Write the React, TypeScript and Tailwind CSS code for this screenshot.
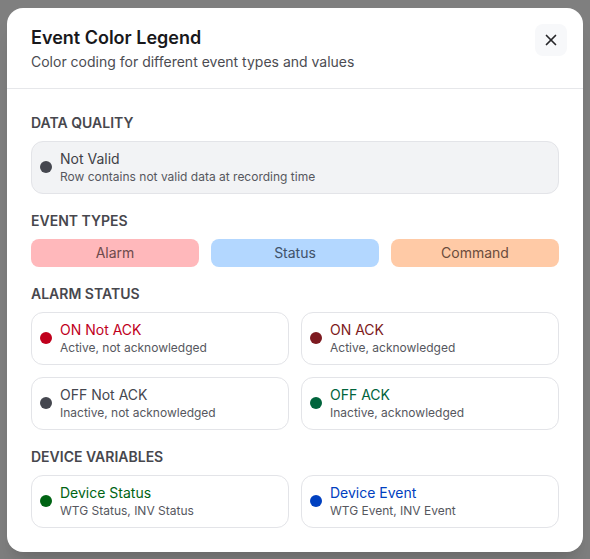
import { X } from "lucide-react";

type Item = {
  label: string;
  desc: string;
  dot: string;
  text: string;
};

const alarmItems: Item[] = [
  { label: "ON Not ACK", desc: "Active, not acknowledged", dot: "bg-[#c0001c]", text: "text-[#c0001c]" },
  { label: "ON ACK", desc: "Active, acknowledged", dot: "bg-[#7d1a20]", text: "text-[#7d1a20]" },
  { label: "OFF Not ACK", desc: "Inactive, not acknowledged", dot: "bg-[#45474f]", text: "text-[#45474f]" },
  { label: "OFF ACK", desc: "Inactive, acknowledged", dot: "bg-[#00643c]", text: "text-[#00643c]" },
];

const deviceItems: Item[] = [
  { label: "Device Status", desc: "WTG Status, INV Status", dot: "bg-[#006414]", text: "text-[#006414]" },
  { label: "Device Event", desc: "WTG Event, INV Event", dot: "bg-[#0040c0]", text: "text-[#0040c0]" },
];

function SectionTitle({ children }: { children: string }) {
  return (
    <div className="text-sm leading-5 font-semibold uppercase text-[#47474d] mb-2">{children}</div>
  );
}

function LegendCard({ item, muted }: { item: Item; muted?: boolean }) {
  return (
    <div
      className={`flex items-center gap-2 rounded-xl border border-[#e3e4e8] px-2 py-[7.5px] ${
        muted ? "bg-[#f2f3f5]" : "bg-white"
      }`}
    >
      <span className={`h-3 w-3 shrink-0 rounded-full ${item.dot}`} />
      <div className="min-w-0">
        <div className={`text-sm leading-5 ${item.text}`}>{item.label}</div>
        <div className="text-xs leading-4 text-[#56575e]">{item.desc}</div>
      </div>
    </div>
  );
}

export default function App() {
  return (
    <div
      className="min-h-screen w-full bg-[#7f7f7f] flex items-center justify-center"
      style={{ fontFamily: "Inter, 'Noto Sans', sans-serif" }}
    >
      <div className="relative w-[576px] rounded-2xl bg-white shadow-xl">
        <div className="border-b border-[#e6e7ea] px-6 pt-4 pb-4">
          <h2 className="text-lg leading-7 font-semibold text-[#18181b]">Event Color Legend</h2>
          <p className="text-sm leading-5 text-[#4b4c52]">
            Color coding for different event types and values
          </p>
          <button className="absolute right-4 top-4 flex h-8 w-8 items-center justify-center rounded-lg bg-[#f7f8fa] text-[#27272a]">
            <X size={18} strokeWidth={2.25} />
          </button>
        </div>

        <div className="flex flex-col gap-[17px] px-6 pt-6 pb-6">
          <section>
            <SectionTitle>Data Quality</SectionTitle>
            <LegendCard
              muted
              item={{
                label: "Not Valid",
                desc: "Row contains not valid data at recording time",
                dot: "bg-[#45474f]",
                text: "text-[#3f3f46]",
              }}
            />
          </section>

          <section>
            <SectionTitle>Event Types</SectionTitle>
            <div className="grid grid-cols-3 gap-3">
              <div className="flex h-7 items-center justify-center rounded-lg bg-[#ffb8bb] text-sm text-[#6e4a4c]">
                Alarm
              </div>
              <div className="flex h-7 items-center justify-center rounded-lg bg-[#b3d7ff] text-sm text-[#40526a]">
                Status
              </div>
              <div className="flex h-7 items-center justify-center rounded-lg bg-[#ffcaa6] text-sm text-[#6b4c3c]">
                Command
              </div>
            </div>
          </section>

          <section>
            <SectionTitle>Alarm Status</SectionTitle>
            <div className="grid grid-cols-2 gap-3">
              {alarmItems.map((it) => (
                <LegendCard key={it.label} item={it} />
              ))}
            </div>
          </section>

          <section>
            <SectionTitle>Device Variables</SectionTitle>
            <div className="grid grid-cols-2 gap-3">
              {deviceItems.map((it) => (
                <LegendCard key={it.label} item={it} />
              ))}
            </div>
          </section>
        </div>
      </div>
    </div>
  );
}
